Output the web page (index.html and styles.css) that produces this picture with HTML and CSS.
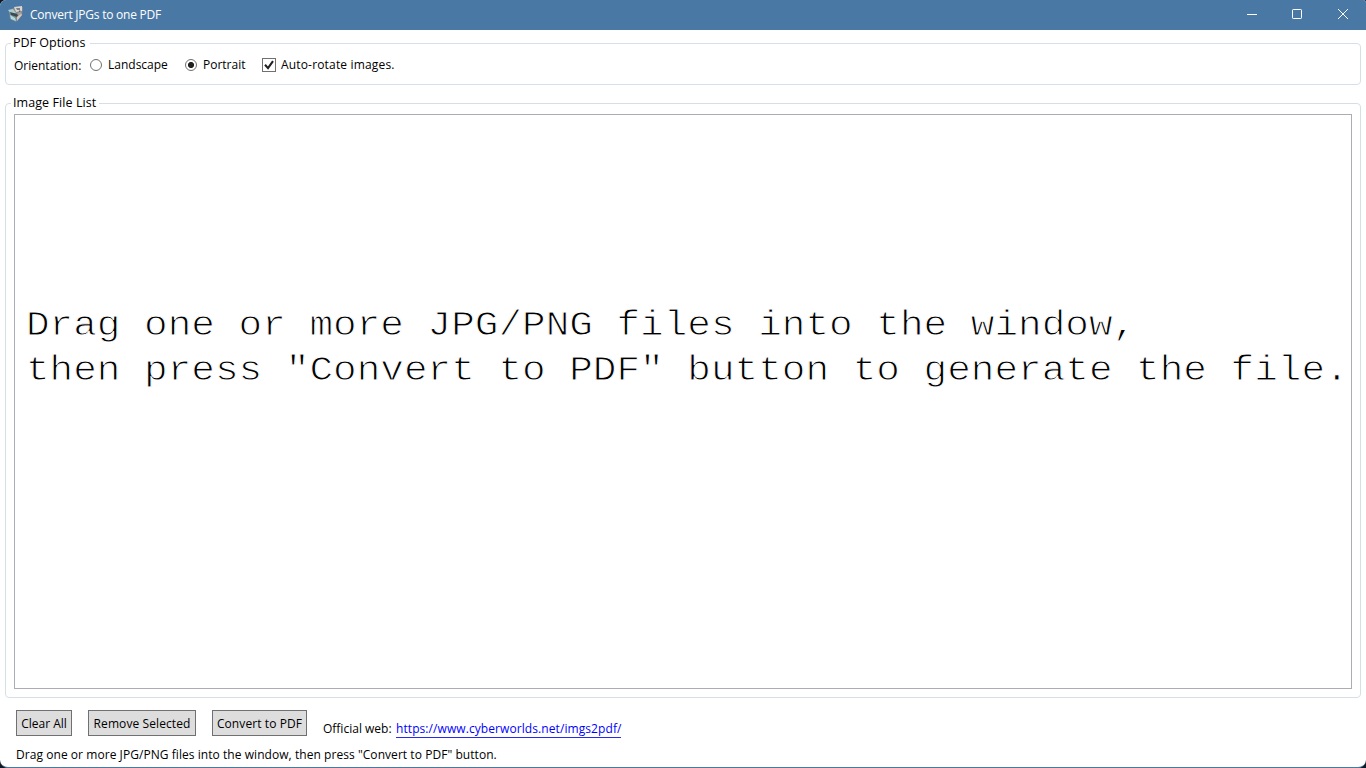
FILE: index.html
```html
<!DOCTYPE html>
<html lang="en">
<head>
<meta charset="utf-8">
<title>Convert JPGs to one PDF</title>
<link rel="stylesheet" href="styles.css">
</head>
<body>
<div class="window">
  <header class="titlebar">
    <svg class="app-icon" width="16" height="16" viewBox="0 0 16 16">
      <path d="M1 4l5-2 9-1-1 8-6 7-6-3z" fill="#858b90"/>
      <path d="M6 1l8-1v5l-6 1z" fill="#d9d5d0"/>
      <path d="M8 2l4 0v2l-3 0z" fill="#7a8087"/>
      <path d="M0 4l5-1 3 4-5 1z" fill="#a9cccb"/>
      <path d="M2 6l7 2 3-4 1 2-4 5-6-2z" fill="#394a55"/>
      <path d="M2 9l5 3 1 3-5-2z" fill="#a9dfe1"/>
      <path d="M9 11l4-4 1 2-5 6z" fill="#d4c7c0"/>
      <path d="M9 7l4-2v3l-3 2z" fill="#a79f9c"/>
    </svg>
    <h1 class="title">Convert JPGs to one PDF</h1>
    <div class="controls">
      <svg class="control" width="12" height="12" viewBox="0 0 12 12"><path d="M2 6.5h10"/></svg>
      <svg class="control" width="12" height="12" viewBox="0 0 12 12"><rect x="1.5" y="1.5" width="9" height="9" rx=".7"/></svg>
      <svg class="control" width="12" height="12" viewBox="0 0 12 12"><path d="M1 1l10 10M11 1L1 11"/></svg>
    </div>
  </header>
  <main class="content">
    <section class="group options">
      <h2 class="legend"><span class="legend-options">PDF Options</span></h2>
      <div class="option-row">
        <span class="label orientation">Orientation:</span>
        <span class="radio"></span>
        <span class="label landscape">Landscape</span>
        <span class="radio checked"></span>
        <span class="label portrait">Portrait</span>
        <svg class="checkbox" width="14" height="14" viewBox="0 0 14 14"><rect x=".5" y=".5" width="13" height="13" fill="#fff" stroke="#707070"/><path d="M3 6.8l3 3.3 5-7" fill="none" stroke="#212121" stroke-width="2.1"/></svg>
        <span class="label autorotate">Auto-rotate images.</span>
      </div>
    </section>
    <section class="group files">
      <h2 class="legend"><span class="legend-files">Image File List</span></h2>
      <div class="list"><p class="hint">Drag one or more JPG/PNG files into the window,
then press "Convert to PDF" button to generate the file.</p></div>
    </section>
  </main>
  <footer class="footer">
    <div class="actions">
      <button class="button clear"><span>Clear All</span></button>
      <button class="button remove"><span>Remove Selected</span></button>
      <button class="button convert"><span>Convert to PDF</span></button>
      <span class="official">Official web:</span>
      <a class="link" href="#">https://www.cyberworlds.net/imgs2pdf/</a>
    </div>
    <p class="status">Drag one or more JPG/PNG files into the window, then press "Convert to PDF" button.</p>
  </footer>
</div>
</body>
</html>
```
FILE: styles.css
```css
* { box-sizing: border-box; margin: 0; }
body {
  width: 1366px; height: 768px; overflow: hidden;
  background: #101820;
  font: 12px/16px "Open Sans", "Noto Sans", sans-serif;
  color: #000;
}
.window {
  width: 1366px; height: 768px;
  display: flex; flex-direction: column;
  background: #fff;
  border-bottom: 1px solid #4a78a4;
  border-radius: 6px 3px 8px 8px;
  overflow: hidden;
}
.titlebar {
  height: 30px; flex: none;
  display: flex; align-items: center;
  padding: 0 17px 2px 8px;
  background: #4a78a5; color: #fff;
}
.app-icon { flex: none; margin-right: 6px; }
.title { padding-top: 2px; font-size: 12px; font-weight: 400; white-space: nowrap; letter-spacing: -.23px; }
.controls { display: flex; gap: 34px; margin-left: auto; }
.control { width: 12px; fill: none; stroke: #fff; }
.content { padding: 5px 5px 0; flex: none; }
.group {
  border: 1px solid #d5dfe5; border-radius: 4px;
  padding: 0 8px;
}
.options { height: 42px; margin-top: 8px; }
.files { height: 595px; margin-top: 18px; }
.legend {
  height: 10px; margin: -9px 0 0 -3px;
  font-size: 12.5px; font-weight: 400; line-height: 16px;
}
.legend span { display: inline-block; padding: 0 2px; background: #fff; white-space: nowrap; }
.legend-options { width: 79px; }
.legend-files { width: 88px; letter-spacing: .08px; }
.option-row { display: flex; align-items: center; height: 16px; margin-top: 12px; }
.label { flex: none; white-space: nowrap; }
.orientation { width: 76px; padding-top: 1px; }
.landscape { width: 77px; }
.portrait { width: 59px; }
.autorotate { letter-spacing: .17px; }
.radio {
  width: 12px; height: 12px; margin-right: 6px; flex: none;
  border: 1px solid #707070; border-radius: 50%; background: #fff;
}
.radio.checked { background: radial-gradient(circle, #212121 2.7px, #fff 3.4px); }
.checkbox { flex: none; margin-right: 5px; }
.list {
  height: 575px; margin-top: 9px; padding: 189px 0 0 11px;
  border: 1px solid #abadb3;
}
.hint {
  font: 39.37px/51.2px "Liberation Mono", monospace;
  white-space: pre;
  transform: scaleY(.87);
  transform-origin: 0 0;
  -webkit-text-stroke: 1.1px #fff;
}
.footer { padding: 12px 16px 0; }
.actions { display: flex; height: 28px; }
.button {
  height: 26px; padding: 2px 0 0; margin-right: 16px; flex: none;
  border: 1px solid #707070; background: #ddd; color: #000;
  font: inherit; white-space: nowrap;
}
.clear { width: 56px; }
.remove { width: 108px; letter-spacing: .09px; }
.convert { width: 95px; letter-spacing: .09px; }
.official { width: 73px; padding-top: 11px; white-space: nowrap; flex: none; }
.link {
  height: 17px; margin-top: 11px;
  border-bottom: 1px solid #2a2aee; color: #00f;
  text-decoration: none; white-space: nowrap; letter-spacing: .08px;
}
.status { margin-top: 9px; white-space: nowrap; letter-spacing: .055px; }
```
